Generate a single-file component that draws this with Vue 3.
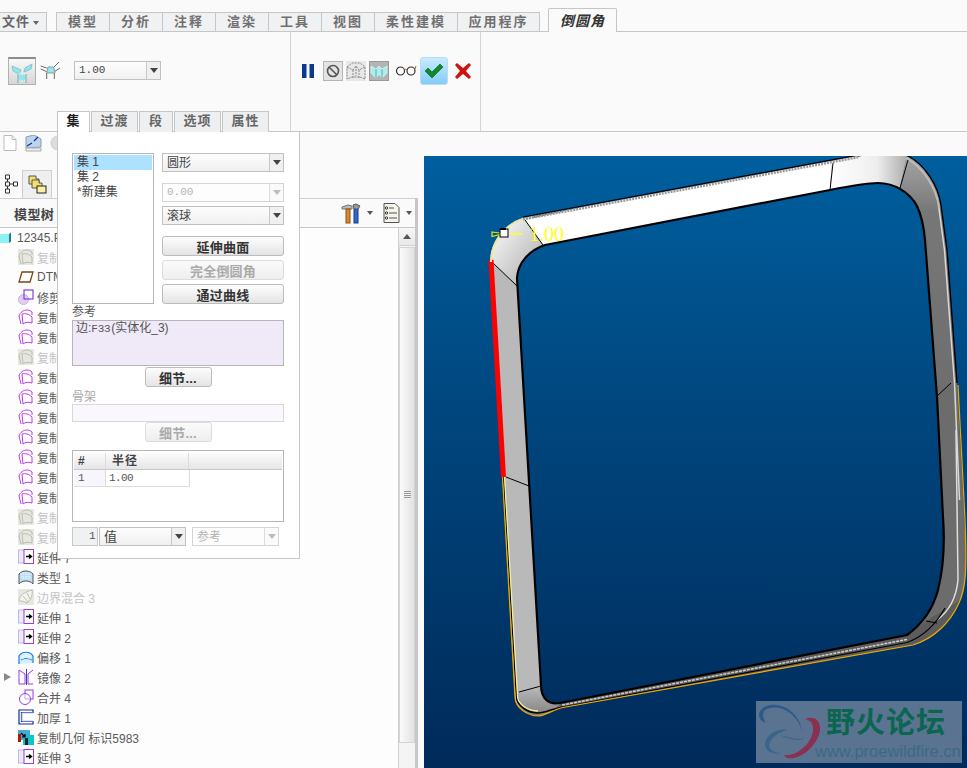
<script setup>
const topTabs = [
  { t: '模型', w: 52 }, { t: '分析', w: 52 }, { t: '注释', w: 52 }, { t: '渲染', w: 52 },
  { t: '工具', w: 52 }, { t: '视图', w: 52 }, { t: '柔性建模', w: 82 }, { t: '应用程序', w: 81 }
]
const panelTabs = [
  { t: '集', w: 33, on: true }, { t: '过渡', w: 47 }, { t: '段', w: 34 }, { t: '选项', w: 47 }, { t: '属性', w: 47 }
]
const tree = [
  { i: 'copyoff', t: '复制几何', off: true }, { i: 'datum', t: 'DTM1' }, { i: 'trim', t: '修剪 1' },
  { i: 'copy', t: '复制 1' }, { i: 'copy', t: '复制 2' }, { i: 'copyoff', t: '复制 3', off: true },
  { i: 'copy', t: '复制 4' }, { i: 'copy', t: '复制 5' }, { i: 'copy', t: '复制 6' }, { i: 'copy', t: '复制 7' },
  { i: 'copy', t: '复制 8' }, { i: 'copy', t: '复制 9' }, { i: 'copy', t: '复制 10' },
  { i: 'copyoff', t: '复制 11', off: true }, { i: 'copyoff', t: '复制 12', off: true },
  { i: 'extend', t: '延伸 7' }, { i: 'type', t: '类型 1' }, { i: 'blend', t: '边界混合 3', off: true },
  { i: 'extend', t: '延伸 1' }, { i: 'extend', t: '延伸 2' }, { i: 'offset', t: '偏移 1' },
  { i: 'mirror', t: '镜像 2', arrow: true }, { i: 'merge', t: '合并 4' }, { i: 'thick', t: '加厚 1' },
  { i: 'geom', t: '复制几何 标识5983' }, { i: 'extend', t: '延伸 3' }
]
const outer = 'M490 262 C490 245 502 225 523 218 L858 156 C880 152 900 152 908 156 C925 165 938 185 941 205 L947 250 L957 383 L964 520 C967 570 966 590 958 605 C950 622 935 638 913 645 L563 707.500 C552 710 545 716 538 716 C528 716 515 708 515 697 Z'
const inner = 'M517 278 C518 262 530 250 545 245 L830 190 C850 186 868 183 878 183 C895 183 910 193 917 206 C922 217 924 228 925 240 L937 397 L943 517 C945 545 943 570 938 590 C934 605 925 622 907 635 L560 703 C548 705 541 698 541 685 Z'
</script>

<template>
  <div class="app">
    <svg class="defs" width="0" height="0">
      <symbol id="copy" viewBox="0 0 16 16"><path d="M1 7C2 3 6 1 9 1c2 0 4 1 5 2v3M1 7l2 8M4 5c3-1 7 0 10 3v6c-3-1-7-1-9 1M4 5l1 10" fill="none" stroke="#b83de8" stroke-width="1"/></symbol>
      <symbol id="copyoff" viewBox="0 0 16 16"><rect width="16" height="16" fill="#e6e6e2"/><path d="M1 7C2 3 6 1 9 1c2 0 4 1 5 2v3M1 7l2 8M4 5c3-1 7 0 10 3v6c-3-1-7-1-9 1M4 5l1 10" fill="none" stroke="#bdbda8" stroke-width="1"/></symbol>
      <symbol id="extend" viewBox="0 0 16 16"><rect x="0.5" y="1" width="6" height="13" fill="#ececec" stroke="#b9b9f0"/><rect x="6" y="0.5" width="9.5" height="14" fill="#fff" stroke="#9a3ce0"/><path d="M8 7.5h5M11 5.500l2.500 2-2.500 2" fill="none" stroke="#000" stroke-width="1.400"/></symbol>
      <symbol id="type" viewBox="0 0 16 16"><path d="M1 15V5C4 1 12 1 15 5v10C12 11 4 11 1 15z" fill="#bfe0f4" stroke="#555"/><path d="M3 5h10M3 8h10M5 3v8M8 3v8M11 3v8" stroke="#e8f4fc" stroke-dasharray="1 1"/></symbol>
      <symbol id="blend" viewBox="0 0 16 16"><rect width="16" height="16" fill="#e6e6e2"/><path d="M1 12C1 6 7 3 14 1c1 5-1 10-5 13C6 12 3 12 1 12zM5 7l5 6M9 4l3 6" fill="#f2f2ee" stroke="#c0c0b0"/></symbol>
      <symbol id="offset" viewBox="0 0 16 16"><path d="M1 15V7C4 2 12 2 15 7v7" fill="#d8eefc" stroke="#0f7fe0" stroke-width="1.200"/><path d="M3 11c3-2 7-2 11 0" fill="none" stroke="#0f7fe0"/><path d="M5 5v6M8 4v6M11 5v6" stroke="#fff" stroke-dasharray="1 1"/></symbol>
      <symbol id="mirror" viewBox="0 0 16 16"><path d="M1 1l6 4v10H1zM15 1l-5 4v10h5" fill="none" stroke="#9a3ce0"/><path d="M8.500 0v16" stroke="#3344aa"/></symbol>
      <symbol id="merge" viewBox="0 0 16 16"><rect x="7" y="1" width="8" height="9" fill="#fff" stroke="#9a3ce0"/><circle cx="7" cy="10" r="5.500" fill="#fff" stroke="#9a3ce0"/><path d="M7 5v5h5" fill="none" stroke="#c9a0ee"/></symbol>
      <symbol id="thick" viewBox="0 0 16 16"><path d="M1 1h14v2.500H3.500v9H15V15H1z" fill="#fff" stroke="#0a2f9a" stroke-width="1.200"/><path d="M4 4h11M4 12h11M4 4v8" stroke="#c4c4ee"/></symbol>
      <symbol id="geom" viewBox="0 0 16 16"><rect x="0" y="1" width="12" height="10" fill="#4aa8d8"/><rect x="0" y="5" width="3" height="8" fill="#b01808"/><rect x="5" y="6" width="11" height="10" fill="#11c4cc"/><rect x="7" y="9" width="3" height="7" fill="#222"/><path d="M3 4l4 4M7 5v3H4" fill="none" stroke="#000" stroke-width="1.200"/></symbol>
      <symbol id="datum" viewBox="0 0 16 16"><path d="M4 3h11l-3 10H1z" fill="#fff" stroke="#7a4416" stroke-width="1.300"/></symbol>
      <symbol id="trim" viewBox="0 0 16 16"><circle cx="5.500" cy="10.500" r="5" fill="#e0d0f0" stroke="#c9b0e0"/><rect x="6" y="1" width="9" height="9" fill="none" stroke="#7a30e0" stroke-width="1.100"/></symbol>
    </svg>

    <header class="tabbar">
      <div class="file-tab">文件<span class="tri"></span></div>
      <nav class="tab-group">
        <div v-for="tab in topTabs" :key="tab.t" class="top-tab" :style="{ width: tab.w + 'px' }">{{ tab.t }}</div>
      </nav>
      <div class="active-tab">倒圆角</div>
    </header>

    <section class="ribbon">
      <div class="rib-a">
        <button class="toggle">
          <svg width="26" height="25" viewBox="0 0 26 25"><path d="M3 7l9 4-2 4-6-3zM23 5l-1 5-7 3 1-4z" fill="#8fe8f0" stroke="#7fb8c0" stroke-width=".8"/><rect x="9" y="15" width="8" height="7" fill="#8fe8f0" stroke="#dff" stroke-dasharray="2 1"/><path d="M9 15v9M17 15v9" stroke="#999"/></svg>
        </button>
        <svg class="rib-icon" width="22" height="24" viewBox="0 0 22 24"><path d="M.7 7l6 2M19 3l-5 5M.7 10l6 2.700M20 9l-5.700 3.700M6.700 14v6M14.300 14v6" stroke="#666" fill="none"/><path d="M8 8h5.500L15 14H6.700z" fill="#8fe8f0" stroke="#8a9a9a"/></svg>
        <div class="combo num-combo"><span class="num">1.00</span><i class="drop"></i></div>
      </div>
      <div class="rib-b">
        <svg class="ic-pause" width="12" height="14" viewBox="0 0 12 14"><path d="M0 0h4.500v14H0zM7.500 0H12v14H7.500z" fill="#0a3a90"/></svg>
        <div class="sq sq-stop"><svg width="14" height="14" viewBox="0 0 14 14"><circle cx="7" cy="7" r="5.500" fill="none" stroke="#555" stroke-width="1.600"/><path d="M3 3l8 8" stroke="#555" stroke-width="1.600"/></svg></div>
        <div class="sq sq-wire"><svg width="20" height="20" viewBox="0 0 20 20"><path d="M1 6l5-4h8l5 4v12l-5-2H6l-5 2zM1 6l6 3 3-4 3 4 6-3M7 9v8M13 9v8M10 5v10" fill="none" stroke="#8a8a8a" stroke-dasharray="2 1"/></svg></div>
        <div class="sq sq-next"><svg width="18" height="18" viewBox="0 0 18 18"><path d="M1 4l5 3 3-3 3 3 5-3v7l-5 5-3-4-3 4-5-5z" fill="#a8eef0" stroke="#e6ffff" stroke-width=".6"/><path d="M6 7v9M12 7v9" stroke="#6aa"/></svg></div>
        <svg class="ic-glasses" width="22" height="14" viewBox="0 0 22 14"><circle cx="5.500" cy="8" r="4" fill="#fff" stroke="#333" stroke-width="1.200"/><circle cx="16" cy="8" r="4" fill="#fff" stroke="#333" stroke-width="1.200"/><path d="M9.500 7c1-1 2-1 2.500 0M20 6l1-3" fill="none" stroke="#a06a20"/></svg>
        <button class="ok"><svg width="20" height="16" viewBox="0 0 20 16"><path d="M1 8l3-3 4 4 8-8 3 3-11 11z" fill="#0c8a2c" stroke="#075f1c" stroke-width=".6"/></svg></button>
        <svg class="ic-x" width="16" height="16" viewBox="0 0 16 16"><path d="M0 2l2-2 6 5 6-5 2 2-5 6 5 6-2 2-6-5-6 5-2-2 5-6z" fill="#cc1410"/></svg>
      </div>
      <div class="rib-c"></div>
    </section>

    <main class="work">
      <aside class="left">
        <div class="quick">
          <svg width="14" height="16" viewBox="0 0 14 16"><path d="M1 .5h8l4 4v11H1z" fill="#fff" stroke="#bbb"/><path d="M9 .5v4h4" fill="none" stroke="#bbb"/></svg>
          <svg width="17" height="17" viewBox="0 0 17 17"><path d="M1 2l8-2 7 4v8l-15 1z" fill="#bcd4ee" stroke="#8a9cb0"/><path d="M2 11l5-3M9 6l4-4" stroke="#0a2f9a" stroke-width="1.200" fill="none"/><path d="M1 13h15v3H1z" fill="#eee" stroke="#aaa"/></svg>
          <svg width="10" height="14" viewBox="0 0 10 14"><circle cx="8" cy="7" r="7" fill="#ddd" stroke="#ccc"/></svg>
        </div>
        <div class="side-tabs">
          <div class="side-tab side-tab-tree">
            <svg width="16" height="20" viewBox="0 0 16 20"><path d="M2.500 1h4v4h-4zM2.500 8h4v4h-4zM2.500 15h4v4h-4zM10.500 8h4v4h-4zM4.500 5v3M4.500 12v3M6.500 10h4" fill="#fff" stroke="#333"/></svg>
          </div>
          <div class="side-tab side-tab-folder">
            <svg width="19" height="19" viewBox="0 0 19 19"><path d="M1 1h7v3h3v5H1z" fill="#f6e06a" stroke="#555"/><path d="M4 5h7v3h3v5H4z" fill="#f6e06a" stroke="#555"/><rect x="9" y="11" width="9" height="7" fill="#f8f0a0" stroke="#222"/></svg>
          </div>
        </div>
        <div class="tree-head">
          <span class="tree-title">模型树</span>
          <div class="tree-tools">
            <svg width="20" height="21" viewBox="0 0 20 21"><path d="M1 4l6-2 4 1v3H1z" fill="#bbb" stroke="#777"/><rect x="5" y="6" width="4" height="14" fill="#d88a28" stroke="#8a5010"/><rect x="13" y="6" width="4" height="14" fill="#2a6ad0" stroke="#143c88"/><path d="M12 2l3-1 4 2-2 3h-4z" fill="#999" stroke="#555"/></svg>
            <i class="tiny-tri"></i>
            <svg class="tool-list" width="17" height="20" viewBox="0 0 17 20"><path d="M1 .5h11l4 4v15H1z" fill="#f4f4ea" stroke="#555"/><path d="M6 5h5M6 10h8M6 15h8" stroke="#555"/><circle cx="3.500" cy="5" r="1.200" fill="none" stroke="#333"/><circle cx="3.500" cy="10" r="1.200" fill="none" stroke="#333"/><circle cx="3.500" cy="15" r="1.200" fill="none" stroke="#333"/></svg>
            <i class="tiny-tri"></i>
          </div>
        </div>
        <div class="tree-wrap">
          <div class="tree">
            <div class="row row-root">
              <svg class="root-icon" width="14" height="12" viewBox="0 0 14 12"><path d="M0 2h11v9H0z" fill="#8ff0f0"/><path d="M11 2l2-1.500v9L11 11z" fill="#2a7a90"/></svg>
              <span>12345.PRT</span>
            </div>
            <div v-for="(n, k) in tree" :key="k" class="row" :class="{ off: n.off }">
              <i v-if="n.arrow" class="expander"></i>
              <svg class="row-icon" width="16" height="16"><use :href="'#' + n.i" /></svg>
              <span>{{ n.t }}</span>
            </div>
          </div>
          <div class="scroll">
            <div class="scroll-btn"><i></i></div>
            <div class="scroll-thumb"><b></b></div>
          </div>
        </div>
      </aside>

      <div class="viewport">
        <svg class="scene" width="543" height="612" viewBox="424 156 543 612">
          <defs>
            <clipPath id="ring"><path :d="outer + ' ' + inner" clip-rule="evenodd" /></clipPath>
            <linearGradient id="c1" x1="0" y1="0" x2="1" y2="1"><stop offset="0.3" stop-color="#fff"/><stop offset="0.85" stop-color="#b9b9b9"/></linearGradient>
            <linearGradient id="c2" x1="0" y1="0" x2="1" y2="0"><stop offset="0" stop-color="#fff"/><stop offset="0.6" stop-color="#eee"/><stop offset="1" stop-color="#aaa"/></linearGradient>
            <linearGradient id="c3" x1="0" y1="0" x2="0" y2="1"><stop offset="0" stop-color="#aaa"/><stop offset="0.25" stop-color="#777"/><stop offset="1" stop-color="#6e6e6e"/></linearGradient>
            <linearGradient id="c4" x1="0" y1="0" x2="0" y2="1"><stop offset="0" stop-color="#bbb"/><stop offset="1" stop-color="#666"/></linearGradient>
          </defs>
          <g clip-path="url(#ring)">
            <rect x="480" y="150" width="500" height="620" fill="#6e6e6e"/>
            <path d="M480 255L493 263 517 286 541 686 519 692 500 780 470 780z" fill="#b9b9b9"/>
            <path d="M519 692L541 686 560 703 540 730 510 720z" fill="url(#c4)"/>
            <path d="M470 190h55l18 55-26 41-24-23z" fill="url(#c1)"/>
            <path d="M525 220L833 150 830 190 543 245z" fill="#fff"/>
            <path d="M833 150h75l-8 38-70 2z" fill="url(#c2)"/>
            <path d="M908 150L900 188 923 227 936 397 951 383 950 200z" fill="url(#c3)"/>
            <path d="M936 397L951 383 970 500 960 600 926 621 943 520z" fill="#6c6c6c"/>
            <path d="M926 621L960 600 960 650 560 720 560 703 907 635z" fill="#5c5c5c"/>
          </g>
          <path d="M523 219L858 157" stroke="#999" stroke-width="3" stroke-dasharray="2 1"/>
          <path d="M523 217L858 155" stroke="#000" stroke-width="1.200"/>
          <path d="M858 156C880 152 900 152 908 156C925 165 938 185 941 205L947 250L957 383" fill="none" stroke="#000" stroke-width="1.400"/>
          <path d="M941 205L947 250L957 383L962 500" fill="none" stroke="#d8d8d8" stroke-width="1.500" transform="translate(-2.500 0)"/>
          <path d="M908 156C925 165 938 185 941 205" fill="none" stroke="#bbb" stroke-width="2" transform="translate(-2 2)"/>
          <path :d="inner" fill="none" stroke="#000" stroke-width="2.200"/>
          <path d="M937 620C948 612 956 600 958 580L956 430" fill="none" stroke="#ddd" stroke-width="1.500"/>
          <path d="M907 642.500L563 707M945 608C936 624 925 636 907 642.500" fill="none" stroke="#000" stroke-width="1.200"/>
          <path d="M907 639.500L562 705" fill="none" stroke="#d0d0d0" stroke-width="1.500" stroke-dasharray="3 1"/>
          <path d="M493 263L517 286M525 220L543 245M833 163L830 190M908 160L900 188M951 383L936 397M926 621L937 623M519 692L541 686M506 477L529 486" stroke="#000" stroke-width="1"/>
          <path d="M491 260L503.500 477" stroke="#f00" stroke-width="5"/>
          <path d="M491 262C491 245 502 225 523 219" fill="none" stroke="#e8e8a0" stroke-width="2"/>
          <path d="M503.500 477L516.500 696C516.500 706 528 713 538 713C545 713 552 709 563 707" fill="none" stroke="#000" stroke-width="1.600"/>
          <path d="M504.500 477L517.500 696C517.500 704 528 711 538 711" fill="none" stroke="#eef0a8" stroke-width="1.300"/>
          <path d="M502.500 477L515 697C515 708 528 716 538 716C545 716 552 710 563 707.500L913 645C935 638 950 622 958 605C966 590 967 570 965 520L958 385" fill="none" stroke="#f0a800" stroke-width="1.200"/>
          <path d="M492 232l12 1.500-12 3z" fill="none" stroke="#e6e600" stroke-width="1.200"/>
          <path d="M510 234h12" stroke="#ffff20" stroke-width="1.600"/>
          <rect x="500" y="229" width="8" height="8" fill="#fff" stroke="#000"/>
          <rect x="500" y="228" width="6" height="2" fill="#000"/>
          <text x="529" y="241" class="dim">1.00</text>
        </svg>
        <div class="mark">
          <svg width="72" height="62" viewBox="0 0 72 62"><path d="M2 14C3 3 22 -1 36 12c5 5 8 11 9 18C41 14 24 2 10 8 5 10 5 16 9 22 5 21 2 18 2 14z" fill="#2c5a8a"/><path d="M48 18c8-3 14 0 15 8 1 12-12 28-26 31-7 1-9-1-10-3 14 2 30-14 29-27 0-5-3-8-8-9z" fill="#8a3050"/><path d="M30 29C22 27 9 33 8 43c0 7 8 11 16 9C15 52 10 47 13 41c3-6 10-10 17-12z" fill="#3a648c"/><path d="M22 34c8 1 18 6 25 3-6 5-16 0-25-3z" fill="#3a648c"/></svg>
          <div class="mark-text">
            <div class="mark-cn">野火论坛</div>
            <div class="mark-url">www.proewildfire.cn</div>
          </div>
        </div>
      </div>
    </main>

    <section class="dialog">
      <div class="dlg-tabs">
        <div v-for="tab in panelTabs" :key="tab.t" class="dlg-tab" :class="{ on: tab.on }" :style="{ width: tab.w + 'px' }">{{ tab.t }}</div>
      </div>
      <div class="dlg-body">
        <div class="dlg-top">
          <div class="set-list">
            <div class="set sel">集 1</div>
            <div class="set">集 2</div>
            <div class="set">*新建集</div>
          </div>
          <div class="dlg-controls">
            <div class="combo"><span>圆形</span><i class="drop"></i></div>
            <div class="combo dis gap-l"><span class="num">0.00</span><i class="drop"></i></div>
            <div class="combo gap-s"><span>滚球</span><i class="drop"></i></div>
            <button class="btn gap-l">延伸曲面</button>
            <button class="btn gap-s" disabled>完全倒圆角</button>
            <button class="btn gap-s">通过曲线</button>
          </div>
        </div>
        <div class="lbl">参考</div>
        <div class="ref"><span>边:</span><span class="ref-code">F33</span><span>(实体化_3)</span></div>
        <button class="btn mini">细节...</button>
        <div class="lbl lbl-off">骨架</div>
        <div class="ref ref-off"></div>
        <button class="btn mini mini-off" disabled>细节...</button>
        <div class="tbl">
          <div class="t-row t-head"><div class="c1">#</div><div class="c2">半径</div><div class="c3"></div></div>
          <div class="t-row t-data"><div class="c1 num">1</div><div class="c2 num">1.00</div></div>
        </div>
        <div class="dlg-bottom">
          <div class="spin num">1</div>
          <div class="combo val"><span>值</span><i class="drop"></i></div>
          <div class="combo dis ref-combo"><span>参考</span><i class="drop"></i></div>
        </div>
      </div>
    </section>
  </div>
</template>

<style scoped>
.app {
  position: relative; width: 967px; height: 768px; overflow: hidden; background: #fafafa;
  font-family: "Liberation Sans", "Noto Sans CJK SC", sans-serif; font-size: 12px; color: #555;
}
.defs { position: absolute; }
.tabbar { display: flex; height: 32px; padding-top: 12px; box-sizing: border-box; border-bottom: 1px solid #c6c6c6; }
.file-tab { width: 47px; height: 19px; box-sizing: border-box; padding-left: 2px; border: 1px solid #c6c6c6; border-left: 0; border-bottom: 0; background: #f0f1f3; font-weight: 700; font-size: 13px; line-height: 17px; letter-spacing: 1px; color: #666; }
.tri { display: inline-block; margin-left: 3px; vertical-align: 1px; border: 3px solid transparent; border-top: 4px solid #666; border-bottom: 0; }
.tab-group { display: flex; margin-left: 9px; height: 19px; border: 1px solid #c6c6c6; border-bottom: 0; box-sizing: border-box; }
.top-tab { box-sizing: border-box; margin-right: 1px; background: #f0f1f3; box-shadow: 1px 0 0 #c6c6c6; text-align: center; font-weight: 700; font-size: 13px; line-height: 18px; letter-spacing: 2px; color: #707070; }
.top-tab:last-child { margin-right: 0; box-shadow: none; }
.active-tab { width: 69px; height: 24px; box-sizing: border-box; margin: -4px 0 -1px 8px; border: 1px solid #c6c6c6; border-bottom: 0; border-radius: 2px 2px 0 0; background: #fafafa; text-align: center; font-style: italic; font-weight: 700; font-size: 14px; line-height: 24px; letter-spacing: 1px; color: #333; }
.ribbon { display: flex; height: 100px; box-sizing: border-box; border-bottom: 1px solid #c6c6c6; }
.rib-a { display: flex; align-items: flex-start; width: 291px; box-sizing: border-box; padding: 25px 0 0 8px; border-right: 1px solid #d4d4d4; }
.toggle { width: 28px; height: 28px; padding: 0; border: 1px solid #b0b0b0; border-top: 2px solid #8c8c8c; background: linear-gradient(#f8f8f8, #d6d6d6); display: block; }
.toggle svg { display: block; }
.rib-icon { margin: 2px 0 0 4px; }
.num-combo { width: 87px; margin: 4px 0 0 12px; background: #fff; }
.rib-b { display: flex; align-items: flex-start; width: 190px; box-sizing: border-box; padding: 25px 0 0 11px; border-right: 1px solid #d4d4d4; }
.ic-pause { margin: 7px 9px 0 0; }
.sq { width: 20px; height: 20px; box-sizing: border-box; margin: 4px 3px 0 0; display: flex; align-items: center; justify-content: center; }
.sq-stop { background: #e4e4e4; border: 1px solid #b4b4b4; }
.sq-wire { background: #e8e8e8; }
.sq-next { background: #b4b4b4; border: 1px solid #999; }
.ic-glasses { margin: 6px 0 0 3px; }
.ok { width: 28px; height: 28px; margin-left: 3px; padding: 0; border: 1px solid #b8dcf2; border-radius: 3px; background: linear-gradient(#c8eafd, #84ccfa); display: flex; align-items: center; justify-content: center; }
.ic-x { margin: 6px 0 0 7px; }
.rib-c { flex: 1; }
.work { display: flex; height: 636px; }
.left { width: 418px; flex: none; display: flex; flex-direction: column; }
.quick { display: flex; align-items: center; gap: 8px; height: 22px; padding-left: 3px; box-sizing: border-box; }
.side-tabs { display: flex; height: 44px; padding-top: 16px; box-sizing: border-box; }
.side-tab { height: 28px; display: flex; justify-content: center; padding-top: 4px; box-sizing: border-box; }
.side-tab-tree { width: 22px; background: #fafafa; }
.side-tab-folder { width: 30px; background: #eeeff1; border: 1px solid #d0d0d0; border-bottom: 0; }
.tree-head { display: flex; justify-content: space-between; align-items: center; height: 30px; box-sizing: border-box; padding-left: 14px; border-top: 1px solid #d0d0d0; border-bottom: 1px solid #c6c6c6; border-right: 3px solid #c6c6c6; position: relative; }
.tree-title { font-weight: 700; font-size: 13px; color: #444; letter-spacing: .4px; }
.tree-tools { display: flex; align-items: center; padding-right: 3px; }
.tiny-tri { display: block; margin-left: 6px; border: 3px solid transparent; border-top: 4px solid #555; border-bottom: 0; }
.tool-list { margin-left: 10px; }
.tree-wrap { flex: 1; display: flex; min-height: 0; border-right: 3px solid #c8c8c8; }
.tree { flex: 1; background: #fdfdfd; overflow: hidden; }
.row { position: relative; display: flex; align-items: center; height: 20px; padding-left: 18px; gap: 3px; white-space: nowrap; color: #5a5a5a; }
.row.off { color: #c4c4c4; }
.row-root { height: 19px; box-sizing: border-box; padding: 1px 0 0; gap: 5px; }
.root-icon { margin-left: -2px; }
.row-icon { flex: none; }
.expander { position: absolute; left: 4px; top: 6px; border: 4px solid transparent; border-left: 7px solid #8a8a8a; border-right: 0; }
.scroll { width: 17px; flex: none; border-left: 1px solid #d0d0d0; box-sizing: border-box; display: flex; flex-direction: column; background: #f4f4f4; }
.scroll-btn { height: 17px; background: linear-gradient(#f6f6f6, #e8e8e8); border-bottom: 1px solid #d0d0d0; display: flex; align-items: center; justify-content: center; }
.scroll-btn i { border: 4px solid transparent; border-bottom: 5px solid #555; border-top: 0; }
.scroll-thumb { height: 494px; margin-top: 1px; background: linear-gradient(90deg, #fafafa, #e2e2e2); border: 1px solid #d4d4d4; display: flex; align-items: center; justify-content: center; }
.scroll-thumb b { width: 7px; height: 8px; background: repeating-linear-gradient(#999 0 1px, #eee 1px 2px); }
.viewport { position: relative; flex: 1; margin: 24px 0 0 6px; background: linear-gradient(#005f9f 0%, #00477f 40%, #002a5a 100%); }
.scene { display: block; }
.dim { font-family: "Liberation Serif", serif; font-size: 20px; fill: #ffff20; }
.mark { position: absolute; left: 332px; top: 545px; width: 206px; height: 62px; display: flex; background: #5a7390; }
.mark svg { flex: none; margin-left: 1px; }
.mark-text { display: flex; flex-direction: column; margin-left: -14px; flex: none; width: 147px; }
.mark-cn { margin-left: 11px; font-family: "Noto Sans CJK SC", sans-serif; font-weight: 700; font-size: 29px; line-height: 38px; letter-spacing: 1px; color: #0b6650; white-space: nowrap; }
.mark-url { margin-left: 0; font-size: 16.500px; line-height: 24px; color: #3a6a86; white-space: nowrap; }
.dialog { position: absolute; left: 57px; top: 111px; width: 243px; display: flex; flex-direction: column; }
.dlg-tabs { display: flex; height: 21px; gap: 1px; margin-bottom: -1px; position: relative; z-index: 1; }
.dlg-tab { box-sizing: border-box; height: 21px; background: #eeeff1; border: 1px solid #c6c6c6; border-bottom: 0; text-align: center; font-weight: 700; font-size: 13px; line-height: 18px; letter-spacing: 1px; color: #666; }
.dlg-tab.on { background: #fff; color: #222; }
.dlg-body { height: 428px; box-sizing: border-box; padding: 21px 15px 0 14px; background: #fff; border: 1px solid #c6c6c6; display: flex; flex-direction: column; }
.dlg-top { display: flex; gap: 8px; height: 151px; }
.set-list { width: 82px; box-sizing: border-box; padding: 1px; border: 1px solid #b6b6b6; font-size: 12px; color: #444; }
.set { height: 15px; line-height: 14px; padding-left: 3px; white-space: nowrap; }
.set.sel { background: #aee0ff; }
.dlg-controls { flex: 1; display: flex; flex-direction: column; }
.combo { position: relative; box-sizing: border-box; height: 19px; display: flex; align-items: center; padding: 0 0 2px 4px; border: 1px solid #c0c0c0; background: linear-gradient(#fdfdfd, #f0f0f0); color: #444; }
.combo .drop { position: absolute; right: 0; top: 0; bottom: 0; width: 14px; box-sizing: border-box; border-left: 1px solid #c8c8c8; background: #f0f0f0; }
.drop::after { content: ""; position: absolute; left: 3px; top: 6px; border: 4px solid transparent; border-top: 5px solid #444; border-bottom: 0; }
.combo.dis { background: #fdfdfd; border-color: #d4d4d4; color: #b4b4b4; }
.combo.dis .drop { background: #fafafa; border-left-color: #dcdcdc; }
.combo.dis .drop::after { border-top-color: #bbb; }
.gap-s { margin-top: 4px; }
.gap-l { margin-top: 11px; }
.dlg-controls .gap-s { flex: none; }
.btn { height: 20px; padding: 0 0 2px; border: 1px solid #bcbcbc; border-radius: 3px; background: linear-gradient(#fdfdfd, #e4e4e4); font: 700 13px "Liberation Sans", "Noto Sans CJK SC", sans-serif; letter-spacing: .2px; color: #333; }
.btn:disabled { color: #aaa; border-color: #dcdcdc; background: linear-gradient(#fbfbfb, #eeeeee); }
.lbl { height: 15px; line-height: 15px; margin-top: 1px; color: #555; }
.lbl-off { color: #aaa; margin-top: 4px; height: 13px; line-height: 13px; }
.ref { height: 46px; box-sizing: border-box; padding-left: 3px; border: 1px solid #b6b6b6; background: #f0eaf8; line-height: 15px; color: #555; }
.ref-code { font-family: "Liberation Mono", monospace; font-size: 11px; letter-spacing: -.3px; margin-right: 1px; }
.ref-off { height: 18px; background: #faf8fe; border-color: #d8d8d8; }
.mini { width: 67px; align-self: center; margin-top: 1px; }
.mini-off { margin-top: 0; }
.num { font-family: "Liberation Mono", monospace; font-size: 11px; letter-spacing: -.6px; }
.combo .num { letter-spacing: 0; }
.tbl { height: 72px; margin-top: 8px; box-sizing: border-box; padding: 2px 1px 0; border: 1px solid #b6b6b6; }
.t-row { display: flex; }
.t-head { height: 17px; background: linear-gradient(#fbfbfb, #e6e6e6); border-bottom: 1px solid #c8c8c8; box-sizing: border-box; font-weight: 700; font-size: 12px; line-height: 16px; color: #444; }
.t-data { height: 17px; box-sizing: border-box; width: 116px; border-bottom: 1px solid #dcdcdc; border-right: 1px solid #dcdcdc; line-height: 16px; color: #555; }
.c1 { width: 32px; box-sizing: border-box; padding-left: 5px; border-right: 1px solid #dcdcdc; }
.c2 { width: 83px; box-sizing: border-box; padding-left: 3px; }
.t-head .c1 { padding-left: 4px; }
.t-head .c2 { padding-left: 6px; border-right: 1px solid #dcdcdc; letter-spacing: 1px; }
.t-data .c1 { padding-left: 4px; background: #f8f5fd; }
.dlg-bottom { display: flex; margin-top: 5px; height: 19px; }
.spin { width: 26px; box-sizing: border-box; padding-right: 2px; border: 1px solid #c8c8c8; background: #f0f1f3; text-align: right; line-height: 17px; }
.val { width: 87px; margin-left: 1px; font-size: 13px; }
.ref-combo { width: 87px; margin-left: 6px; }
</style>
